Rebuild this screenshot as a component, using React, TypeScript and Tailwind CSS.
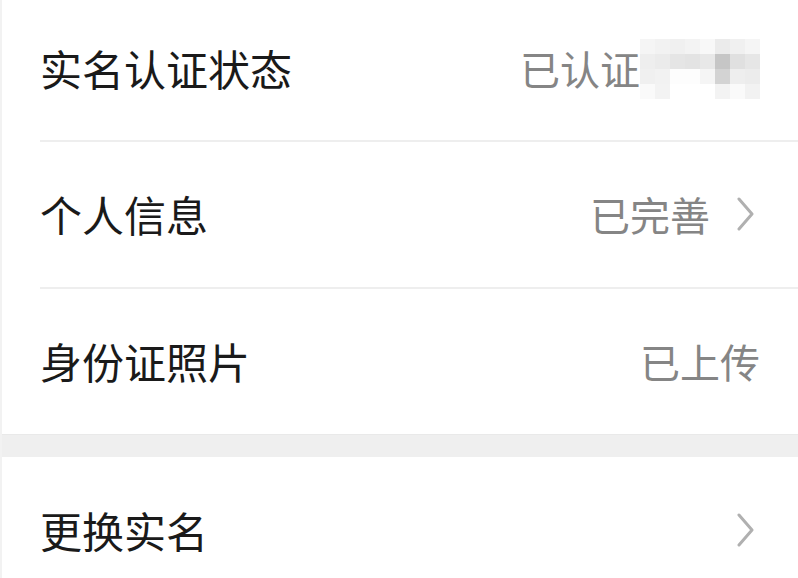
import React from "react"

const mosaic = [
  ["#f5f5f5", "#f2f2f2", "#f0f0f0", "#f3f3f3", "#f8f8f8", "#ebebeb", "#f0f0f0", "#f5f5f5"],
  ["#eeeeee", "#ebebeb", "#e5e5e5", "#e3e3e3", "#e8e8e8", "#c6c6c6", "#e0e0e0", "#e6e6e6"],
  ["#f0f0f0", "#f2f2f2", "#fdfdfd", "#fdfdfd", "#f5f5f5", "#d3d3d3", "#eeeeee", "#ececec"],
  ["#fafafa", "#f3f3f3", "#ffffff", "#ffffff", "#ffffff", "#f3f3f3", "#fafafa", "#f2f2f2"],
]

function Chevron() {
  return (
    <svg width="20" height="34" viewBox="0 0 20 34" fill="none" className="ml-[26px]">
      <polyline points="3,2 16,17 3,32" stroke="#b0b0b0" strokeWidth="3" strokeLinecap="round" strokeLinejoin="round" />
    </svg>
  )
}

function Mosaic() {
  return (
    <div className="grid grid-cols-[repeat(8,15px)] grid-rows-[repeat(4,15px)] mt-[2px]">
      {mosaic.flat().map((c, i) => (
        <div key={i} style={{ backgroundColor: c }} />
      ))}
    </div>
  )
}

function Row({
  label,
  value,
  arrow,
  extra,
  className,
}: {
  label: string
  value?: string
  arrow?: boolean
  extra?: React.ReactNode
  className?: string
}) {
  return (
    <div className={"flex items-center justify-between pl-[38px] " + (className ?? "h-[147px]")}>
      <span className="text-[42px] leading-none text-[#1a1a1a]">{label}</span>
      <div className={"flex items-center " + (arrow ? "pr-[42px]" : "pr-[38px]")}>
        {value && <span className="text-[40px] leading-none text-[#858585]">{value}</span>}
        {extra}
        {arrow && <Chevron />}
      </div>
    </div>
  )
}

export default function App() {
  return (
    <div
      className="w-[798px] h-[578px] overflow-hidden bg-white border-l-2 border-[#f2f2f2]"
      style={{ fontFamily: '"Noto Sans CJK SC", "Noto Sans", sans-serif' }}
    >
      <Row label="实名认证状态" value="已认证" extra={<Mosaic />} className="h-[140px] pb-[5px]" />
      <div className="ml-[38px] h-[2px] bg-[#eeeeee]" />
      <Row label="个人信息" value="已完善" arrow className="h-[145px] pb-[2px]" />
      <div className="ml-[38px] h-[2px] bg-[#eeeeee]" />
      <Row label="身份证照片" value="已上传" className="h-[145px] pb-[2px]" />
      <div className="h-[23px] bg-[#efefef] border-t border-[#e9e9e9]" />
      <Row label="更换实名" arrow className="h-[148px] pb-[2px]" />
    </div>
  )
}
